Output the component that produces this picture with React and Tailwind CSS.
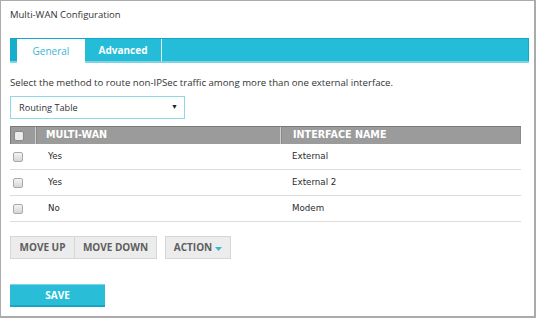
import React from "react";

const rows = [
  ["Yes", "External"],
  ["Yes", "External 2"],
  ["No", "Modem"],
];

function Box({ header }) {
  return (
    <div
      className={
        header
          ? "w-[10px] h-[10px] rounded-[2px] border border-[#8a8a8a] bg-[#ececec]"
          : "w-[10px] h-[10px] rounded-[2px] border border-[#a9a9a9] bg-gradient-to-b from-[#f4f4f4] to-[#d6d6d6]"
      }
    />
  );
}

export default function App() {
  return (
    <div className="w-[536px] h-[318px] bg-white border-l border-t border-r-2 border-b-2 border-[#ababab] text-[#333] font-['Open_Sans',sans-serif] flex flex-col pl-[9px] pr-[5px]">
      <div className="h-[28px] pt-[7px] text-[9.5px] leading-[14px]">Multi-WAN Configuration</div>
      {/* tabs */}
      <div className="mt-[9px] h-[25px] flex bg-[#25bcd8] border-t border-[#10a8c8] border-b-2 border-b-[#7fd3e6]">
        <div className="w-[7px] bg-[#16aecd]" />
        <div className="w-[68px] bg-white -mb-[2px] flex items-center justify-center text-[10px] text-[#3cb6d4]">
          General
        </div>
        <div className="w-[76px] flex items-center justify-center text-[10px] font-bold text-white">
          Advanced
        </div>
        <div className="w-px bg-[#e0f5fa]" />
        <div className="flex-1 border-r border-[#10a8c8]" />
      </div>
      <div className="mt-[14px] text-[9.65px] leading-[12px] text-[#333]">
        Select the method to route non-IPSec traffic among more than one external interface.
      </div>
      <div className="mt-[7px] w-[175px] h-[23px] border border-[#8fd8e8] flex items-center justify-between pl-[8px] pr-[6px] text-[9.2px]">
        <span>Routing Table</span>
        <span className="text-[7px] text-[#222]">▼</span>
      </div>
      {/* table */}
      <div className="mt-[7px] w-[511px] font-['DejaVu_Sans',sans-serif]">
        <div className="h-[18px] flex bg-[#9b9b9b] border-t border-l border-[#7a7a7a] text-white font-bold text-[9.6px]">
          <div className="w-[24px] flex items-center pl-[3px]">
            <Box header />
          </div>
          <div className="w-px bg-[#cfcfcf]" />
          <div className="w-px bg-[#8a8a8a]" />
          <div className="w-[243px] flex items-center pl-[9px]">MULTI-WAN</div>
          <div className="w-px bg-[#cfcfcf]" />
          <div className="w-px bg-[#8a8a8a]" />
          <div className="flex-1 flex items-center pl-[11px] border-r border-[#8a8a8a]">INTERFACE NAME</div>
        </div>
        {rows.map((r, i) => (
          <div key={i} className="h-[26px] flex items-center border-b-[1.5px] border-[#dcdcdc] text-[8.7px] text-[#2a2a2a]">
            <div className="w-[24px] flex items-center pl-[3px]">
              <Box />
            </div>
            <div className="w-[255px] pl-[14px]">{r[0]}</div>
            <div className="flex-1 pl-[3px]">{r[1]}</div>
          </div>
        ))}
      </div>
      {/* buttons */}
      <div className="mt-[14px] flex text-[10px] font-bold text-[#5e5e5e]">
        <div className="w-[65px] h-[23px] flex items-center justify-center bg-[#ececec] border border-[#d6d6d6]">MOVE UP</div>
        <div className="w-[82px] h-[23px] flex items-center justify-center bg-[#ececec] border border-l-0 border-[#d6d6d6]">MOVE DOWN</div>
        <div className="ml-[8px] w-[66px] h-[23px] flex items-center justify-center gap-[3px] bg-[#ececec] border border-[#d6d6d6]">
          ACTION
          <svg width="7" height="4" viewBox="0 0 7 4" className="mt-[2px]">
            <path d="M0 0H7L3.5 4Z" fill="#3cb6d4" />
          </svg>
        </div>
      </div>
      <div className="mt-[25px] w-[95px] h-[23px] flex items-center justify-center bg-[#29bdd8] border-b-2 border-[#16a6c4] border-t border-t-[#7fd3e6] text-white font-bold text-[10px]">
        SAVE
      </div>
    </div>
  );
}
